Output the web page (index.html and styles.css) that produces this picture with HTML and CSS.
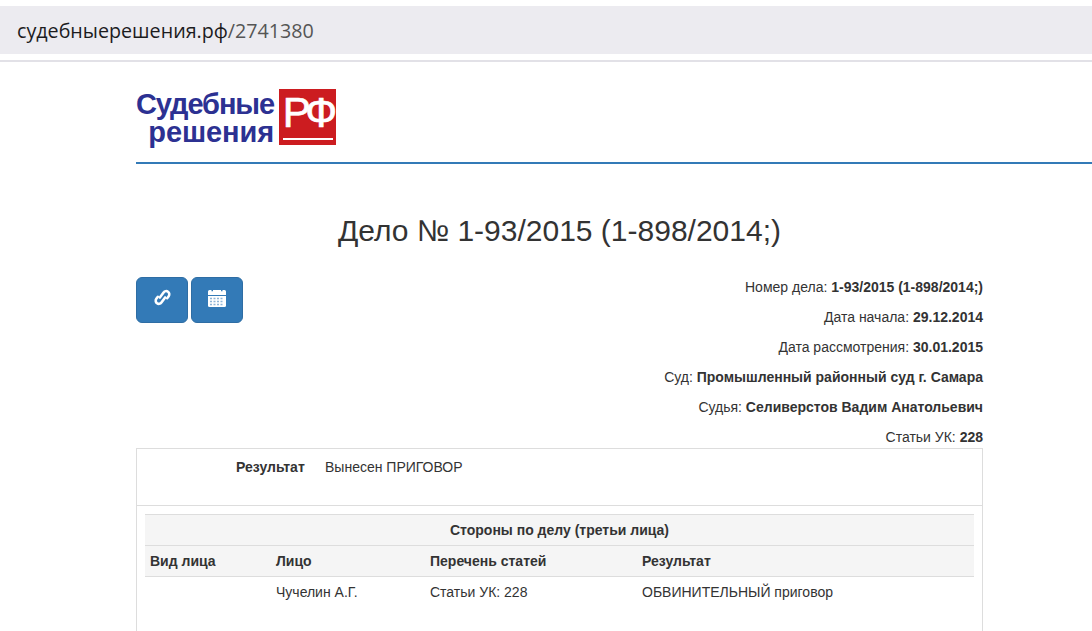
FILE: index.html
```html
<!DOCTYPE html>
<html lang="ru">
<head>
  <meta charset="UTF-8">
  <meta name="viewport" content="width=device-width, initial-scale=1.0">
  <title>Дело № 1-93/2015</title>
  <link rel="stylesheet" href="styles.css">
</head>
<body>
  <div class="address-bar">судебныерешения.рф<span class="address-path">/2741380</span></div>
  <div class="address-rule"></div>

  <div class="page">
    <header class="site-header">
      <a class="logo" href="#">
        <span class="logo-words">
          <span class="logo-line-1">Судебные</span>
          <span class="logo-line-2">решения</span>
        </span>
        <span class="logo-badge"><span class="logo-letters">РФ</span></span>
      </a>
    </header>

    <div class="content">
      <h1>Дело № 1-93/2015 (1-898/2014;)</h1>

      <div class="case-top">
        <div class="actions">
          <button class="btn" type="button" aria-label="Ссылка">
            <svg width="19" height="19" viewBox="0 0 18 18" fill="none" stroke="#fff" stroke-width="2.4" stroke-linecap="round">
              <g transform="rotate(-54 9 9)">
                <path d="M7.5 7H13.500a3 3 0 0 1 0 6H11"/>
                <path d="M10.500 11H4.500a3 3 0 0 1 0-6H7"/>
              </g>
            </svg>
          </button>
          <button class="btn" type="button" aria-label="Календарь">
            <svg width="18" height="18" viewBox="0 0 18 18">
              <path fill="#fff" d="M0 2.500A1.500 1.500 0 0 1 1.500 1h15A1.500 1.500 0 0 1 18 2.500V6H0z"/>
              <path fill="#337ab7" d="M3.500 0h1.500v2.200H3.500zM13 0h1.500v2.200H13z"/>
              <path fill="#fff" d="M0 7h18v9.500a1.500 1.500 0 0 1-1.500 1.500h-15A1.500 1.500 0 0 1 0 16.500z"/>
              <path stroke="#8fb4d6" stroke-width="1.500" stroke-dasharray="2 1.500" d="M2 9.500h14M2 12.500h14M2 15.500h14"/>
            </svg>
          </button>
        </div>

        <div class="case-meta">
          <p>Номер дела: <b>1-93/2015 (1-898/2014;)</b></p>
          <p>Дата начала: <b>29.12.2014</b></p>
          <p>Дата рассмотрения: <b>30.01.2015</b></p>
          <p>Суд: <b>Промышленный районный суд г. Самара</b></p>
          <p>Судья: <b>Селиверстов Вадим Анатольевич</b></p>
          <p>Статьи УК: <b>228</b></p>
        </div>
      </div>

      <div class="panel">
        <div class="result-row">
          <b class="result-label">Результат</b>
          <span>Вынесен ПРИГОВОР</span>
        </div>
        <div class="panel-body">
          <table class="parties">
            <thead>
              <tr><th colspan="4" class="parties-title">Стороны по делу (третьи лица)</th></tr>
              <tr>
                <th class="col-kind">Вид лица</th>
                <th class="col-person">Лицо</th>
                <th class="col-articles">Перечень статей</th>
                <th>Результат</th>
              </tr>
            </thead>
            <tbody>
              <tr>
                <td></td>
                <td>Чучелин А.Г.</td>
                <td>Статьи УК: 228</td>
                <td>ОБВИНИТЕЛЬНЫЙ приговор</td>
              </tr>
            </tbody>
          </table>
        </div>
      </div>
    </div>
  </div>
</body>
</html>
```

FILE: styles.css
```css
html, body {
  height: 100%;
  overflow: hidden;
}
body {
  font-family: "Liberation Sans", Arial, sans-serif;
  font-size: 14px;
  line-height: 20px;
  background-color: #fff;
  margin: 0;
  padding-top: 6px;
  box-sizing: border-box;
  color: #333;
}
.address-bar {
  height: 48px;
  padding-left: 17px;
  background-color: #ecebf0;
  font-family: "Open Sans", "Noto Sans", sans-serif;
  font-size: 19.7px;
  line-height: 50px;
  color: #1c1c1e;
}
.address-path {
  color: #555;
}
.address-rule {
  height: 2px;
  margin-top: 6px;
  background-color: #e2e1e7;
}
.page {
  padding-left: 136px;
}
.site-header {
  height: 100px;
  border-bottom: 2px solid #337ab7;
}
.logo {
  display: flex;
  align-items: flex-start;
  padding-top: 27px;
  text-decoration: none;
}
.logo-words {
  display: flex;
  flex-direction: column;
  align-items: flex-end;
  width: 138px;
  margin-top: 1px;
  font-size: 29px;
  font-weight: bold;
  line-height: 28px;
  color: #2c3192;
}
.logo-line-1 {
  letter-spacing: -1.1px;
}
.logo-line-2 {
  letter-spacing: -0.1px;
}
.logo-badge {
  display: flex;
  justify-content: center;
  width: 57px;
  height: 56px;
  margin-left: 5px;
  background-color: #cc1c20;
}
.logo-letters {
  width: 50px;
  height: 49px;
  border-bottom: 2px solid #fff;
  font-size: 42px;
  line-height: 48px;
  text-align: center;
  white-space: nowrap;
  letter-spacing: -5px;
  color: #fff;
  -webkit-text-stroke: 0.7px #fff;
}
.content {
  width: 847px;
}
h1 {
  margin: 49px 0 28px;
  font-size: 30px;
  font-weight: 500;
  line-height: 36px;
  text-align: center;
}
.case-top {
  display: flex;
  justify-content: space-between;
}
.actions {
  display: flex;
  gap: 3px;
  align-items: flex-start;
}
.btn {
  display: flex;
  align-items: center;
  justify-content: center;
  width: 52px;
  height: 46px;
  padding: 0 0 5px;
  background-color: #337ab7;
  border: 1px solid #2e6da4;
  border-radius: 6px;
}
.case-meta {
  text-align: right;
}
.case-meta p {
  margin: 0 0 10px;
}
.case-meta p:last-child {
  margin-bottom: 1px;
}
.panel {
  height: 183px;
  box-sizing: border-box;
  border: 1px solid #ddd;
  border-bottom: 0;
}
.result-row {
  display: flex;
  height: 57px;
  padding: 8px 0 0 99px;
  box-sizing: border-box;
  border-bottom: 1px solid #ddd;
}
.result-label {
  width: 89px;
}
.panel-body {
  padding: 8px;
}
.parties {
  width: 100%;
  border-collapse: collapse;
}
.parties th {
  padding: 5px;
  background-color: #f5f5f5;
  border-top: 1px solid #ddd;
  font-weight: bold;
  text-align: left;
}
.parties td {
  padding: 5px;
  border-top: 1px solid #ddd;
}
.parties .parties-title {
  text-align: center;
}
.col-kind {
  width: 116px;
}
.col-person {
  width: 144px;
}
.col-articles {
  width: 202px;
}
```
